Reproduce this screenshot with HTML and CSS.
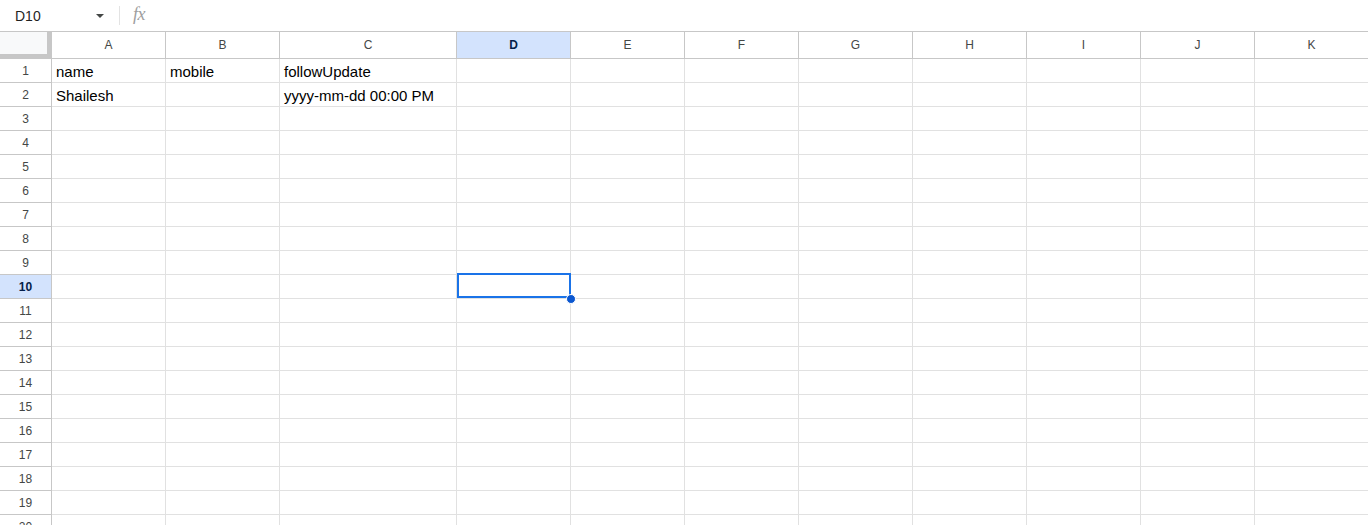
FILE: index.html
```html
<!DOCTYPE html>
<html lang="en">
<head>
  <meta charset="UTF-8" />
  <title>Sheet1</title>
  <link rel="stylesheet" href="styles.css">
</head>
<body>

<div class="formula-bar">
  <div class="name-box">
    <span class="cell-ref">D10</span>
    <span class="caret"></span>
  </div>
  <div class="divider"></div>
  <span class="fx">fx</span>
</div>

<div class="sheet" id="sheet"></div>

<script>
  const cols = ['A', 'B', 'C', 'D', 'E', 'F', 'G', 'H', 'I', 'J', 'K'];
  const data = [
    ['name', 'mobile', 'followUpdate'],
    ['Shailesh', '', 'yyyy-mm-dd 00:00 PM']
  ];
  const active = { col: 3, row: 10 };
  const rowCount = 21;
  const sheet = document.getElementById('sheet');

  function cell(cls, text) {
    const el = document.createElement('div');
    el.className = cls;
    if (text) el.textContent = text;
    sheet.appendChild(el);
    return el;
  }

  // Column headers
  cell('corner');
  cols.forEach((c, i) => {
    cell('col-head' + (i === active.col ? ' is-active' : ''), c);
  });

  // Rows
  for (let r = 1; r <= rowCount; r++) {
    cell('row-head' + (r === active.row ? ' is-active' : ''), String(r));
    cols.forEach((c, i) => {
      const values = data[r - 1] || [];
      const el = cell('cell', values[i]);
      if (r === active.row && i === active.col) {
        el.classList.add('selected');
        const box = document.createElement('div');
        box.className = 'selection';
        const handle = document.createElement('span');
        handle.className = 'fill-handle';
        box.appendChild(handle);
        el.appendChild(box);
      }
    });
  }
</script>

</body>
</html>
```

FILE: styles.css
```css
* {
  box-sizing: border-box;
  margin: 0;
  padding: 0;
}

html, body {
  height: 100%;
  overflow: hidden;
}

body {
  font-family: 'Liberation Sans', Arial, sans-serif;
  background: #fff;
  color: #000;
}

/* Name box + formula input */
.formula-bar {
  height: 32px;
  display: flex;
  align-items: center;
  border-bottom: 1px solid #c7c7c7;
}

.name-box {
  width: 119px;
  display: flex;
  align-items: center;
  padding-left: 15px;
}

.cell-ref {
  font-size: 14px;
  color: #1f1f1f;
  flex: 1;
}

.caret {
  width: 0;
  height: 0;
  border-left: 4px solid transparent;
  border-right: 4px solid transparent;
  border-top: 4px solid #444746;
  margin-right: 15px;
  margin-top: 1px;
}

.divider {
  width: 1px;
  height: 19px;
  background: #e3e3e3;
}

.fx {
  font-family: 'Liberation Serif', serif;
  font-style: italic;
  font-size: 18px;
  color: #9e9e9e;
  margin-left: 13px;
  margin-top: -2px;
  letter-spacing: -0.5px;
}

/* Grid */
.sheet {
  display: grid;
  grid-template-columns: 52px 114px 114px 177px repeat(8, 114px);
  grid-template-rows: 27px;
  grid-auto-rows: 24px;
}

.corner {
  background: #f8f9fa;
  border-right: 5px solid #c7c7c7;
  border-bottom: 5px solid #c7c7c7;
}

.col-head,
.row-head {
  display: flex;
  align-items: center;
  justify-content: center;
  font-size: 12px;
  color: #444746;
  background: #fff;
}

.col-head {
  border-right: 1px solid #c7c7c7;
  border-bottom: 1px solid #c7c7c7;
}

.row-head {
  border-right: 1px solid #c7c7c7;
  border-bottom: 1px solid #c7c7c7;
  padding-top: 1px;
}

.col-head.is-active,
.row-head.is-active {
  background: #d3e3fd;
  color: #041e49;
  font-weight: bold;
}

.cell {
  border-right: 1px solid #e1e1e1;
  border-bottom: 1px solid #e1e1e1;
  font-size: 15px;
  line-height: 23px;
  padding-left: 4px;
  padding-top: 1px;
  white-space: nowrap;
  overflow: visible;
}

.cell.selected {
  position: relative;
}

.selection {
  position: absolute;
  left: 0;
  top: -2px;
  width: 114px;
  height: 25px;
  border: 2px solid #1a73e8;
  z-index: 2;
}

.fill-handle {
  position: absolute;
  right: -7px;
  bottom: -8px;
  width: 10px;
  height: 10px;
  border-radius: 50%;
  background: #0b57d0;
  border: 1px solid #fff;
}
```
